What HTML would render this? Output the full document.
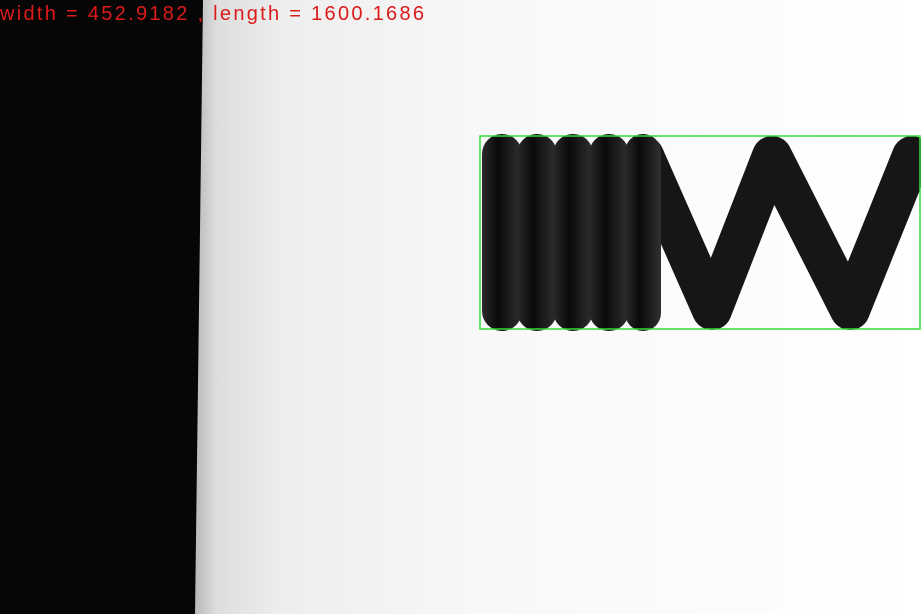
<!DOCTYPE html>
<html><head><style>
html,body{margin:0;padding:0;width:921px;height:614px;overflow:hidden;background:#fff}
</style></head><body>
<svg width="921" height="614" xmlns="http://www.w3.org/2000/svg" style="display:block">
<defs>
<linearGradient id="bg" x1="195" x2="921" y1="0" y2="0" gradientUnits="userSpaceOnUse">
<stop offset="0" stop-color="#b8b8b8"/>
<stop offset="0.03" stop-color="#dedede"/>
<stop offset="0.12" stop-color="#eeeeee"/>
<stop offset="0.4" stop-color="#f8f8f8"/>
<stop offset="1" stop-color="#ffffff"/>
</linearGradient>
<linearGradient id="coil" x1="0" x2="1" y1="0" y2="0">
<stop offset="0" stop-color="#2a2a2a"/>
<stop offset="0.4" stop-color="#0a0a0a"/>
<stop offset="1" stop-color="#303030"/>
</linearGradient>
</defs>
<rect x="0" y="0" width="921" height="614" fill="url(#bg)"/>
<polygon points="0,0 203,0 195,614 0,614" fill="#060606"/>
<g stroke="#161616" stroke-width="40" stroke-linecap="round" stroke-linejoin="round" fill="none">
<polyline points="644,156 712,310 772,156 850,310 912,156"/>
</g>
<g fill="url(#coil)">
<rect x="482" y="134" width="40" height="197" rx="20"/>
<rect x="517" y="134" width="40" height="197" rx="20"/>
<rect x="553" y="134" width="40" height="197" rx="20"/>
<rect x="589" y="134" width="40" height="197" rx="20"/>
<rect x="625" y="134" width="36" height="197" rx="18"/>
</g>
<rect x="480" y="136" width="440" height="193" fill="none" stroke="#33dd33" stroke-width="1.5"/>
<text x="0" y="20" font-family="Liberation Sans, sans-serif" font-size="20" fill="#dd1a1a" textLength="424">width = 452.9182 , length = 1600.1686</text>
</svg>
</body></html>
